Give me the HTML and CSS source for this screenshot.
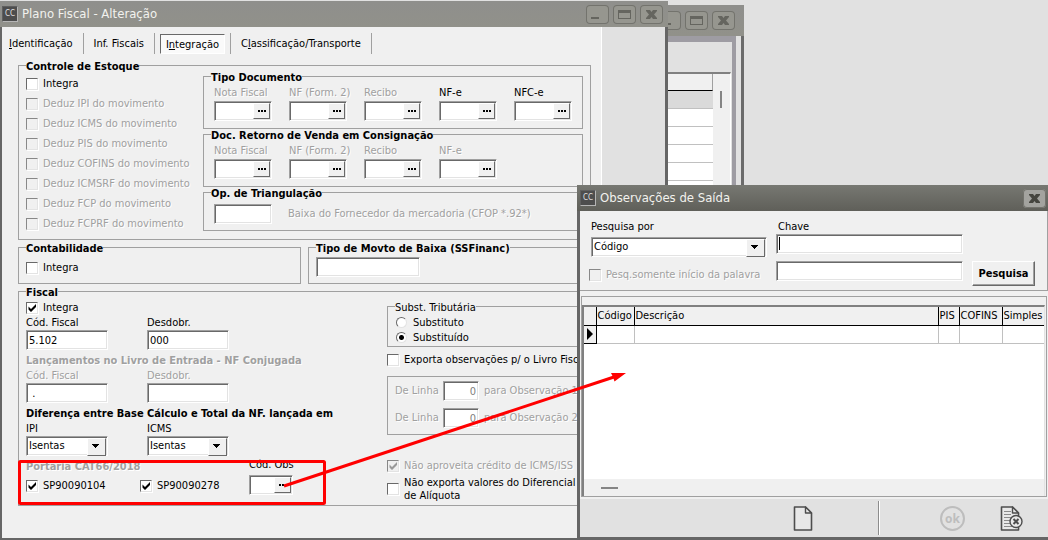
FILE: index.html
```html
<!DOCTYPE html>
<html lang="pt-BR">
<head>
<meta charset="utf-8">
<title>Plano Fiscal - Alteração</title>
<link rel="stylesheet" href="styles.css">
</head>
<body>
<main class="desktop">

  <section class="window window-back" aria-label="Lista">
    <header class="titlebar titlebar-back">
      <div class="win-buttons">
        <button class="win-btn" aria-label="Minimizar lista"><svg viewBox="0 0 23 19"><path class="ico" d="M5 12h8v2H5z"/></svg></button>
        <button class="win-btn" aria-label="Maximizar lista"><svg viewBox="0 0 23 19"><path class="ico" fill-rule="evenodd" d="M5 5h13v9H5zM6 8v5h11V8z"/></svg></button>
        <button class="win-btn" aria-label="Fechar lista"><svg viewBox="0 0 23 19"><path class="ico" d="M6 5h4l1.500 2L13 5h4v1l-3 3.500 3 3.500v1h-4l-1.500-2L10 14H6v-1l3-3.500L6 6z"/></svg></button>
      </div>
    </header>
    <div class="back-frame">
      <div class="back-grid">
        <div class="back-rows">
          <div class="back-head"></div>
          <div class="back-row selected"></div>
          <div class="back-row"></div>
          <div class="back-row"></div>
          <div class="back-row"></div>
          <div class="back-row"></div>
        </div>
        <div class="back-scroll"><div class="back-thumb"></div></div>
      </div>
    </div>
  </section>

  <section class="window window-main" aria-label="Plano Fiscal">
    <header class="titlebar titlebar-main">
      <span class="app-icon">CC</span>
      <h1 class="title">Plano Fiscal - Alteração</h1>
      <div class="win-buttons">
        <button class="win-btn" aria-label="Minimizar"><svg viewBox="0 0 23 19"><path class="ico" d="M5 12h8v2H5z"/></svg></button>
        <button class="win-btn" aria-label="Maximizar"><svg viewBox="0 0 23 19"><path class="ico" fill-rule="evenodd" d="M5 5h13v9H5zM6 8v5h11V8z"/></svg></button>
        <button class="win-btn" aria-label="Fechar"><svg viewBox="0 0 23 19"><path class="ico" d="M6 5h4l1.500 2L13 5h4v1l-3 3.500 3 3.500v1h-4l-1.500-2L10 14H6v-1l3-3.500L6 6z"/></svg></button>
      </div>
    </header>
    <div class="main-body">
      <div class="page">
        <nav class="tabs">
          <button class="tab"><u>I</u>dentificação</button>
          <button class="tab">Inf. Fiscais</button>
          <button class="tab active"><span>I<u>n</u>tegração</span></button>
          <button class="tab">C<u>l</u>assificação/Transporte</button>
        </nav>

        <fieldset class="group stock">
          <legend>Controle de Estoque</legend>
          <div class="checks">
            <label class="check"><input type="checkbox">Integra</label>
            <label class="check off"><input type="checkbox" disabled>Deduz IPI do movimento</label>
            <label class="check off"><input type="checkbox" disabled>Deduz ICMS do movimento</label>
            <label class="check off"><input type="checkbox" disabled>Deduz PIS do movimento</label>
            <label class="check off"><input type="checkbox" disabled>Deduz COFINS do movimento</label>
            <label class="check off"><input type="checkbox" disabled>Deduz ICMSRF do movimento</label>
            <label class="check off"><input type="checkbox" disabled>Deduz FCP do movimento</label>
            <label class="check off"><input type="checkbox" disabled>Deduz FCPRF do movimento</label>
          </div>
          <div class="docs">
            <fieldset class="group doc-group">
              <legend>Tipo Documento</legend>
              <div class="lookups">
                <div class="field"><label class="off" for="t1">Nota Fiscal</label><div class="lookup"><input id="t1" type="text"><button aria-label="Buscar nota fiscal"></button></div></div>
                <div class="field"><label class="off" for="t2">NF (Form. 2)</label><div class="lookup"><input id="t2" type="text"><button aria-label="Buscar NF"></button></div></div>
                <div class="field"><label class="off" for="t3">Recibo</label><div class="lookup"><input id="t3" type="text"><button aria-label="Buscar recibo"></button></div></div>
                <div class="field"><label for="t4">NF-e</label><div class="lookup"><input id="t4" type="text"><button aria-label="Buscar NF-e"></button></div></div>
                <div class="field"><label for="t5">NFC-e</label><div class="lookup"><input id="t5" type="text"><button aria-label="Buscar NFC-e"></button></div></div>
              </div>
            </fieldset>
            <fieldset class="group doc-group">
              <legend>Doc. Retorno de Venda em Consignação</legend>
              <div class="lookups">
                <div class="field"><label class="off" for="r1">Nota Fiscal</label><div class="lookup"><input id="r1" type="text"><button aria-label="Buscar nota de retorno"></button></div></div>
                <div class="field"><label class="off" for="r2">NF (Form. 2)</label><div class="lookup"><input id="r2" type="text"><button aria-label="Buscar NF de retorno"></button></div></div>
                <div class="field"><label class="off" for="r3">Recibo</label><div class="lookup"><input id="r3" type="text"><button aria-label="Buscar recibo de retorno"></button></div></div>
                <div class="field"><label class="off" for="r4">NF-e</label><div class="lookup"><input id="r4" type="text"><button aria-label="Buscar NF-e de retorno"></button></div></div>
              </div>
            </fieldset>
            <fieldset class="group doc-group">
              <legend>Op. de Triangulação</legend>
              <div class="triang">
                <input class="box" id="op" type="text">
                <label class="off" for="op">Baixa do Fornecedor da mercadoria (CFOP *.92*)</label>
              </div>
            </fieldset>
          </div>
        </fieldset>

        <div class="pair">
          <fieldset class="group accounting">
            <legend>Contabilidade</legend>
            <label class="check"><input type="checkbox">Integra</label>
          </fieldset>
          <fieldset class="group movement">
            <legend>Tipo de Movto de Baixa (SSFinanc)</legend>
            <input class="box" type="text" aria-label="Tipo de movimento de baixa">
          </fieldset>
        </div>

        <fieldset class="group fiscal">
          <legend>Fiscal</legend>
          <div class="fiscal-left">
            <label class="check fiscal-on"><input type="checkbox" checked>Integra</label>
            <div class="two">
              <div class="field"><label for="cf">Cód. Fiscal</label><input class="box" id="cf" type="text" value="5.102"></div>
              <div class="field"><label for="ds">Desdobr.</label><input class="box" id="ds" type="text" value="000"></div>
            </div>
            <h2 class="sub off">Lançamentos no Livro de Entrada - NF Conjugada</h2>
            <div class="two">
              <div class="field"><label class="off" for="cf2">Cód. Fiscal</label><input class="box" id="cf2" type="text" value=" ."></div>
              <div class="field"><label class="off" for="ds2">Desdobr.</label><input class="box" id="ds2" type="text"></div>
            </div>
            <h2 class="sub">Diferença entre Base Cálculo e Total da NF. lançada em</h2>
            <div class="two">
              <div class="field"><label for="ipi">IPI</label><div class="combo"><select id="ipi"><option>Isentas</option></select></div></div>
              <div class="field"><label for="icms">ICMS</label><div class="combo"><select id="icms"><option>Isentas</option></select></div></div>
            </div>
            <div class="decree">
              <div class="decree-main">
                <h2 class="sub off">Portaria CAT66/2018</h2>
                <div class="decree-checks">
                  <label class="check"><input type="checkbox" checked>SP90090104</label>
                  <label class="check"><input type="checkbox" checked>SP90090278</label>
                </div>
              </div>
              <div class="field obs"><label for="obs">Cód. Obs</label><div class="lookup"><input id="obs" type="text"><button aria-label="Buscar observação"></button></div></div>
            </div>
          </div>
          <div class="fiscal-right">
            <fieldset class="group tax">
              <legend>Subst. Tributária</legend>
              <label class="radio"><input type="radio" name="st">Substituto</label>
              <label class="radio"><input type="radio" name="st" checked>Substituído</label>
            </fieldset>
            <label class="check export"><input type="checkbox">Exporta observações p/ o Livro Fiscal</label>
            <div class="lines">
              <div class="line off"><label for="l1">De Linha</label><input class="box" id="l1" type="text" value="0"><span>para Observação 1</span></div>
              <div class="line off"><label for="l2">De Linha</label><input class="box" id="l2" type="text" value="0"><span>para Observação 2</span></div>
            </div>
            <label class="check off"><input type="checkbox" checked disabled>Não aproveita crédito de ICMS/ISS</label>
            <label class="check rate"><input type="checkbox"><span>Não exporta valores do Diferencial<br>de Alíquota</span></label>
          </div>
        </fieldset>
      </div>
      <div class="gutter"></div>
    </div>
  </section>

  <section class="window window-obs" aria-label="Observações de Saída">
    <header class="titlebar titlebar-obs">
      <span class="app-icon">CC</span>
      <h1 class="title">Observações de Saída</h1>
      <div class="win-buttons">
        <button class="win-btn lit" aria-label="Fechar observações"><svg viewBox="0 0 23 19"><path class="ico" d="M6 5h4l1.500 2L13 5h4v1l-3 3.500 3 3.500v1h-4l-1.500-2L10 14H6v-1l3-3.500L6 6z"/></svg></button>
      </div>
    </header>
    <div class="search">
      <div class="search-by">
        <label for="by">Pesquisa por</label>
        <div class="combo"><select id="by"><option>Código</option></select></div>
        <label class="check off"><input type="checkbox" disabled>Pesq.somente início da palavra</label>
      </div>
      <div class="search-key">
        <label for="key">Chave</label>
        <div class="key-box"><input class="box" id="key" type="text"><i class="caret"></i></div>
        <input class="box" type="text" aria-label="Chave complementar">
      </div>
      <button class="push">Pesquisa</button>
    </div>
    <div class="results">
      <div class="grid-box">
        <table class="grid">
          <colgroup><col class="c-mark"><col class="c-code"><col><col class="c-pis"><col class="c-cofins"><col class="c-simples"></colgroup>
          <thead><tr><th></th><th>Código</th><th>Descrição</th><th>PIS</th><th>COFINS</th><th>Simples I</th></tr></thead>
          <tbody><tr><td class="mark"><svg viewBox="0 0 6 12"><path d="M0 0l6 6-6 6z"/></svg></td><td></td><td></td><td></td><td></td><td></td></tr></tbody>
        </table>
        <div class="grid-scroll"><div class="grid-thumb"></div></div>
      </div>
    </div>
    <footer class="actions">
      <button class="action new" aria-label="Novo"><svg viewBox="0 0 24 26"><path fill="#e8e8e8" stroke="#4d4d4d" stroke-width="1.600" stroke-linejoin="round" d="M3.500 2h11l6 6v17h-17z"/><path fill="#e8e8e8" stroke="#4d4d4d" stroke-width="1.400" stroke-linejoin="round" d="M14.500 2v6h6z"/></svg></button>
      <span class="rule"></span>
      <button class="action ok" disabled><span>ok</span></button>
      <button class="action cancel" aria-label="Cancelar"><svg viewBox="0 0 24 26"><path fill="#e8e8e8" stroke="#4d4d4d" stroke-width="1.600" stroke-linejoin="round" d="M1.500 2h11l6 6v17h-17z"/><path fill="#e8e8e8" stroke="#4d4d4d" stroke-width="1.400" stroke-linejoin="round" d="M12.500 2v6h6z"/><path stroke="#8a8a8a" d="M4 6.500h7M4 9.500h7M4 12.500h8M4 15.500h6M4 18.500h6M4 21.500h8"/><circle cx="16" cy="16.500" r="6" fill="#e8e8e8" stroke="#4d4d4d" stroke-width="1.400"/><path stroke="#4d4d4d" stroke-width="2" d="M13.500 14l5 5M18.500 14l-5 5"/></svg></button>
    </footer>
  </section>

  <svg class="callout" viewBox="0 0 1048 540" aria-hidden="true">
    <rect x="19.500" y="461.500" width="305" height="42" rx="1" fill="none" stroke="#f00" stroke-width="3"/>
    <path d="M284 486L614 377" stroke="#f00" stroke-width="3"/>
    <path d="M626 373l-11.500 8.500-1.500-4.500-2-4z" fill="#f00"/>
  </svg>
</main>
</body>
</html>
```
FILE: styles.css
```css
* { box-sizing: border-box; }

body {
  margin: 0;
  font: 11px/14px "DejaVu Sans Condensed", "Noto Sans", sans-serif;
  color: #000;
  background: #e1e1e1;
}

button, input, select { font: inherit; color: inherit; margin: 0; padding: 0; border: 0; border-radius: 0; background: none; }
h1, h2 { margin: 0; font-size: inherit; }
svg { display: block; }

.desktop { position: relative; min-height: 100vh; overflow: hidden; }
.window { position: absolute; display: flex; flex-direction: column; }
.off { color: #a0a0a0; text-shadow: 1px 1px 0 #fff; }

/* Title bars */
.titlebar { display: flex; align-items: center; color: #f2f2ee; }
.title { font-size: 13px; font-weight: 400; line-height: 18px; }
.app-icon {
  width: 16px; height: 16px; margin-right: 4px;
  background: #4d4d4d; border: 1px solid #5f5f5f; border-right-color: #b5b5b5; border-bottom-color: #b5b5b5;
  font-size: 8px; line-height: 13px; text-align: center; color: #e0e0e0;
}
.win-buttons { display: flex; gap: 4px; margin-left: auto; }
.win-btn { width: 23px; height: 19px; border-radius: 4px; background: #96968f; box-shadow: inset 0 0 0 1px #73736d; }
.win-btn.lit { background: #a3a39f; }
.win-btn svg { width: 23px; height: 19px; }
.ico { fill: #65655f; }
.lit .ico { fill: #45453f; }

/* Window behind */
.window-back { left: 640px; top: 5px; width: 104px; bottom: 0; border-right: 3px solid #6b6b6b; background: #e1e1e1; }
.titlebar-back { height: 31px; margin-right: -3px; padding-right: 9px; background: linear-gradient(#8f8f8c 0 3px, #91918a); }
.back-frame { flex: 1; margin-right: 5px; padding-top: 30px; border-top: 6px solid #9e9ca3; border-right: 4px solid #9e9ca3; }
.back-grid { display: flex; height: 100%; margin-right: 1px; border-top: 2px solid #808080; border-right: 1px solid #fff; background: #f0f0f0; }
.back-rows { flex: 1; background: #fff; }
.back-head { height: 17px; border-bottom: 1px solid #000; border-right: 1px solid #a0a0a0; background: #f0f0f0; }
.back-row { height: 18px; border-bottom: 1px solid #c0c0c0; }
.back-row.selected { background: #dadada; }
.back-scroll { width: 17px; padding: 17px 7px; }
.back-thumb { width: 2px; height: 17px; background: #858585; }

/* Main window */
.window-main { left: 0; top: 1px; width: 668px; bottom: 0; border-bottom: 2px solid #666; }
.titlebar-main { height: 26px; padding: 0 5px 0 2px; background: linear-gradient(#8f8f8c 0 3px, #91918a); }
.main-body { flex: 1; display: flex; border: solid #666; border-width: 0 3px 0 2px; background: #f0f0f0; }
.page { flex: 1; min-width: 0; padding: 6px 10px 0 0; }
.gutter { flex: none; width: 64px; border-left: 1px solid #fff; background: #e1e1e1; }

.tabs { display: flex; height: 21px; margin-bottom: 2px; }
.tab { padding: 0 10px; border-right: 1px solid #a0a0a0; white-space: nowrap; }
.tab:first-child { padding-left: 7px; }
.tab.active { padding: 0 5px; }
.tab.active span { display: block; height: 20px; padding: 0 5px; line-height: 20px; background: #fafafa; border: 1px solid #696969; border-right-color: #fff; border-bottom-color: #fff; }

/* Groups */
.group { min-width: 0; margin: 0; padding: 0 7px; border: 1px solid #a0a0a0; }
.group legend { padding: 4px 0 0; font-weight: 700; white-space: nowrap; }
.stock { display: flex; margin-left: 16px; padding-bottom: 5px; }
.checks { width: 177px; }
.check { display: flex; align-items: center; gap: 5px; height: 20px; white-space: nowrap; }
input[type="checkbox"] {
  appearance: none; flex: none; width: 12px; height: 12px; background: #fff center/10px no-repeat;
  border: 1px solid #696969; border-right-color: #e3e3e3; border-bottom-color: #e3e3e3; box-shadow: 1px 1px 0 #fff;
}
input[type="checkbox"]:disabled { background-color: #f0f0f0; border-color: #888 #e3e3e3 #e3e3e3 #888; }
input[type="checkbox"]:checked { background-image: url("data:image/svg+xml,%3Csvg xmlns='http://www.w3.org/2000/svg' viewBox='0 0 10 10'%3E%3Cpath d='M1.500 3.500v3l2.500 2.500 5-5v-3l-5 5z'/%3E%3C/svg%3E"); }
input[type="checkbox"]:checked:disabled { background-image: url("data:image/svg+xml,%3Csvg xmlns='http://www.w3.org/2000/svg' viewBox='0 0 10 10'%3E%3Cpath fill='%23999' d='M1.500 3.500v3l2.500 2.500 5-5v-3l-5 5z'/%3E%3C/svg%3E"); }

.docs { flex: 1; margin-top: -7px; }
.doc-group { padding: 0 10px 7px; }
.doc-group + .doc-group { margin-top: -4px; }
.doc-group:last-child { padding-bottom: 6px; }
.doc-group legend { margin-left: -3px; }
.lookups { display: flex; gap: 17px; padding-top: 1px; }
.field { display: flex; flex-direction: column; gap: 1px; white-space: nowrap; }
.lookups .field { width: 58px; }

.box, .lookup, .combo {
  height: 20px; background: #fff;
  border: 1px solid #a0a0a0; border-right-color: #fff; border-bottom-color: #fff;
  box-shadow: inset 1px 1px 0 #696969, inset -1px -1px 0 #e3e3e3;
}
.box { padding: 0 2px; outline: 0; }
.lookup { display: flex; width: 58px; padding: 1px; }
.lookup input { flex: 1; min-width: 0; padding: 0 2px; outline: 0; }
.lookup button {
  width: 17px;
  background: linear-gradient(90deg, #000 2px, transparent 2px 3px, #000 3px 5px, transparent 5px 6px, #000 6px) 4px 6px/8px 2px no-repeat #f0f0f0;
  border: 1px solid #fff; border-right-color: #696969; border-bottom-color: #696969;
}
.triang { display: flex; align-items: center; gap: 16px; margin-top: 3px; }
.triang .box { width: 58px; }

.pair { display: flex; gap: 7px; margin: -2px 0 0 16px; }
.accounting { width: 283px; height: 46px; }
.accounting .check { margin-top: 2px; }
.movement { flex: 1; height: 46px; }
.movement .box { display: block; width: 104px; margin-top: 1px; }

/* Fiscal */
.fiscal { display: flex; height: 224px; margin: -2px 0 0 16px; padding-right: 0; }
.fiscal-left { flex: none; width: 361px; }
.fiscal-on { height: 16px; }
.two { display: flex; gap: 39px; }
.two .field { width: 82px; gap: 0; }
.sub { margin: 4px 0 1px; white-space: nowrap; }
.combo { display: flex; position: relative; padding: 1px; }
.combo select { flex: 1; appearance: none; padding-left: 1px; outline: 0; }
.combo::after {
  content: ""; position: absolute; right: 1px; top: 1px; width: 17px; height: 16px; pointer-events: none;
  background: linear-gradient(#000 0 0) 4px 5px/7px 1px no-repeat, linear-gradient(#000 0 0) 5px 6px/5px 1px no-repeat, linear-gradient(#000 0 0) 6px 7px/3px 1px no-repeat, linear-gradient(#000 0 0) 7px 8px/1px 1px no-repeat, #f0f0f0;
  border: 1px solid #fff; border-right-color: #696969; border-bottom-color: #696969;
}
.decree { display: flex; }
.decree-main { flex: 1; min-width: 0; }
.decree-checks { display: flex; margin-top: 2px; }
.decree-checks .check { flex: none; width: 114px; }
.obs { flex: none; width: 138px; padding-top: 2px; }
.obs .lookup { width: 44px; margin-top: 2px; }

.fiscal-right { flex: 1; min-width: 0; margin-top: -3px; }
.tax { height: 50px; margin-right: -1px; border-right: 0; }
.tax legend { font-weight: 400; }
.radio { display: flex; align-items: center; gap: 6px; height: 15px; padding-left: 1px; }
.radio input {
  appearance: none; width: 11px; height: 11px; border-radius: 50%; background: #fff;
  border: 1px solid #696969; border-right-color: #e3e3e3; border-bottom-color: #e3e3e3;
}
.radio input:checked { background: radial-gradient(circle, #000 0 2px, #fff 3px); }
.export { margin-top: 3px; }
.lines { height: 59px; margin: 6px 0 21px; padding: 4px 7px; border: 1px solid #a0a0a0; }
.line { display: flex; align-items: center; gap: 5px; height: 20px; margin-bottom: 7px; white-space: nowrap; }
.line label { width: 43px; }
.line .box { width: 36px; color: #808080; text-align: right; }
.rate { height: 26px; }
.rate span { line-height: 13px; }

/* Search window */
.window-obs { left: 577px; right: 0; top: 185px; bottom: 0; border: solid #666; border-width: 0 0 3px 3px; background: #f0f0f0; }
.titlebar-obs { height: 26px; margin-left: -3px; padding: 0 2px 0 3px; background: linear-gradient(#777872, #5f5f59); }
.search { display: flex; height: 80px; padding: 9px 12px 0 11px; border-right: 1px solid #a0a0a0; border-bottom: 1px solid #a0a0a0; }
.search-by { width: 176px; }
.search-by .combo { margin: 3px 0 8px; }
.search-by .check { margin-left: -2px; }
.search-key { flex: 1; margin: 0 9px; }
.search-key label { display: block; margin-left: 2px; }
.search-key .box { display: block; width: 100%; }
.key-box { position: relative; margin-bottom: 7px; }
.caret { position: absolute; left: 3px; top: 3px; width: 1px; height: 13px; background: #000; }
.push {
  align-self: flex-start; width: 63px; height: 25px; margin-top: 41px; font-weight: 700;
  border: 1px solid #fff; border-right-color: #696969; border-bottom-color: #696969; box-shadow: inset -1px -1px 0 #a0a0a0;
}
.results { flex: 1; display: flex; margin: 5px 1px 0; padding-top: 8px; border: 1px solid #a0a0a0; }
.grid-box { flex: 1; min-width: 0; display: flex; flex-direction: column; overflow: hidden; margin: 0 1px 0 0; border-top: 2px solid #808080; border-left: 2px solid #808080; border-right: 1px solid #e3e3e3; background: #fff; }
.grid { width: 100%; table-layout: fixed; border-collapse: collapse; }
.grid th { height: 18px; padding: 0 1px; font-weight: 400; text-align: left; white-space: nowrap; background: #f0f0f0; border-right: 1px solid #000; border-bottom: 1px solid #000; }
.grid td { height: 18px; padding: 0; border-right: 1px solid #c0c0c0; border-bottom: 1px solid #c0c0c0; }
.grid th:last-child, .grid td:last-child { border-right: 0; }
.grid th:last-child { padding-right: 0; }
.grid .mark { padding-left: 3px; background: #f0f0f0; border-color: #000; }
.mark svg { width: 6px; height: 12px; }
.c-mark { width: 12px; }
.c-code { width: 38px; }
.c-pis { width: 21px; }
.c-cofins { width: 43px; }
.c-simples { width: 42px; }
.grid-scroll { height: 17px; margin-top: auto; padding: 8px 17px; background: #f0f0f0; }
.grid-thumb { width: 17px; height: 2px; background: #858585; }

.actions { display: flex; justify-content: flex-end; align-items: center; height: 38px; margin-top: 2px; padding-right: 24px; background: #e1e1e1; }
.action svg { width: 24px; height: 26px; }
.rule { width: 2px; height: 34px; margin: 0 60px 0 63px; border-left: 1px solid #8c8c8c; background: #fff; }
.ok { width: 25px; height: 25px; margin-right: 35px; border: 2px solid #bdbdbd; border-radius: 50%; color: #bdbdbd; font: 700 12px/19px "Open Sans", sans-serif; }

.callout { position: absolute; left: 0; top: 0; width: 1048px; height: 540px; pointer-events: none; }
```
